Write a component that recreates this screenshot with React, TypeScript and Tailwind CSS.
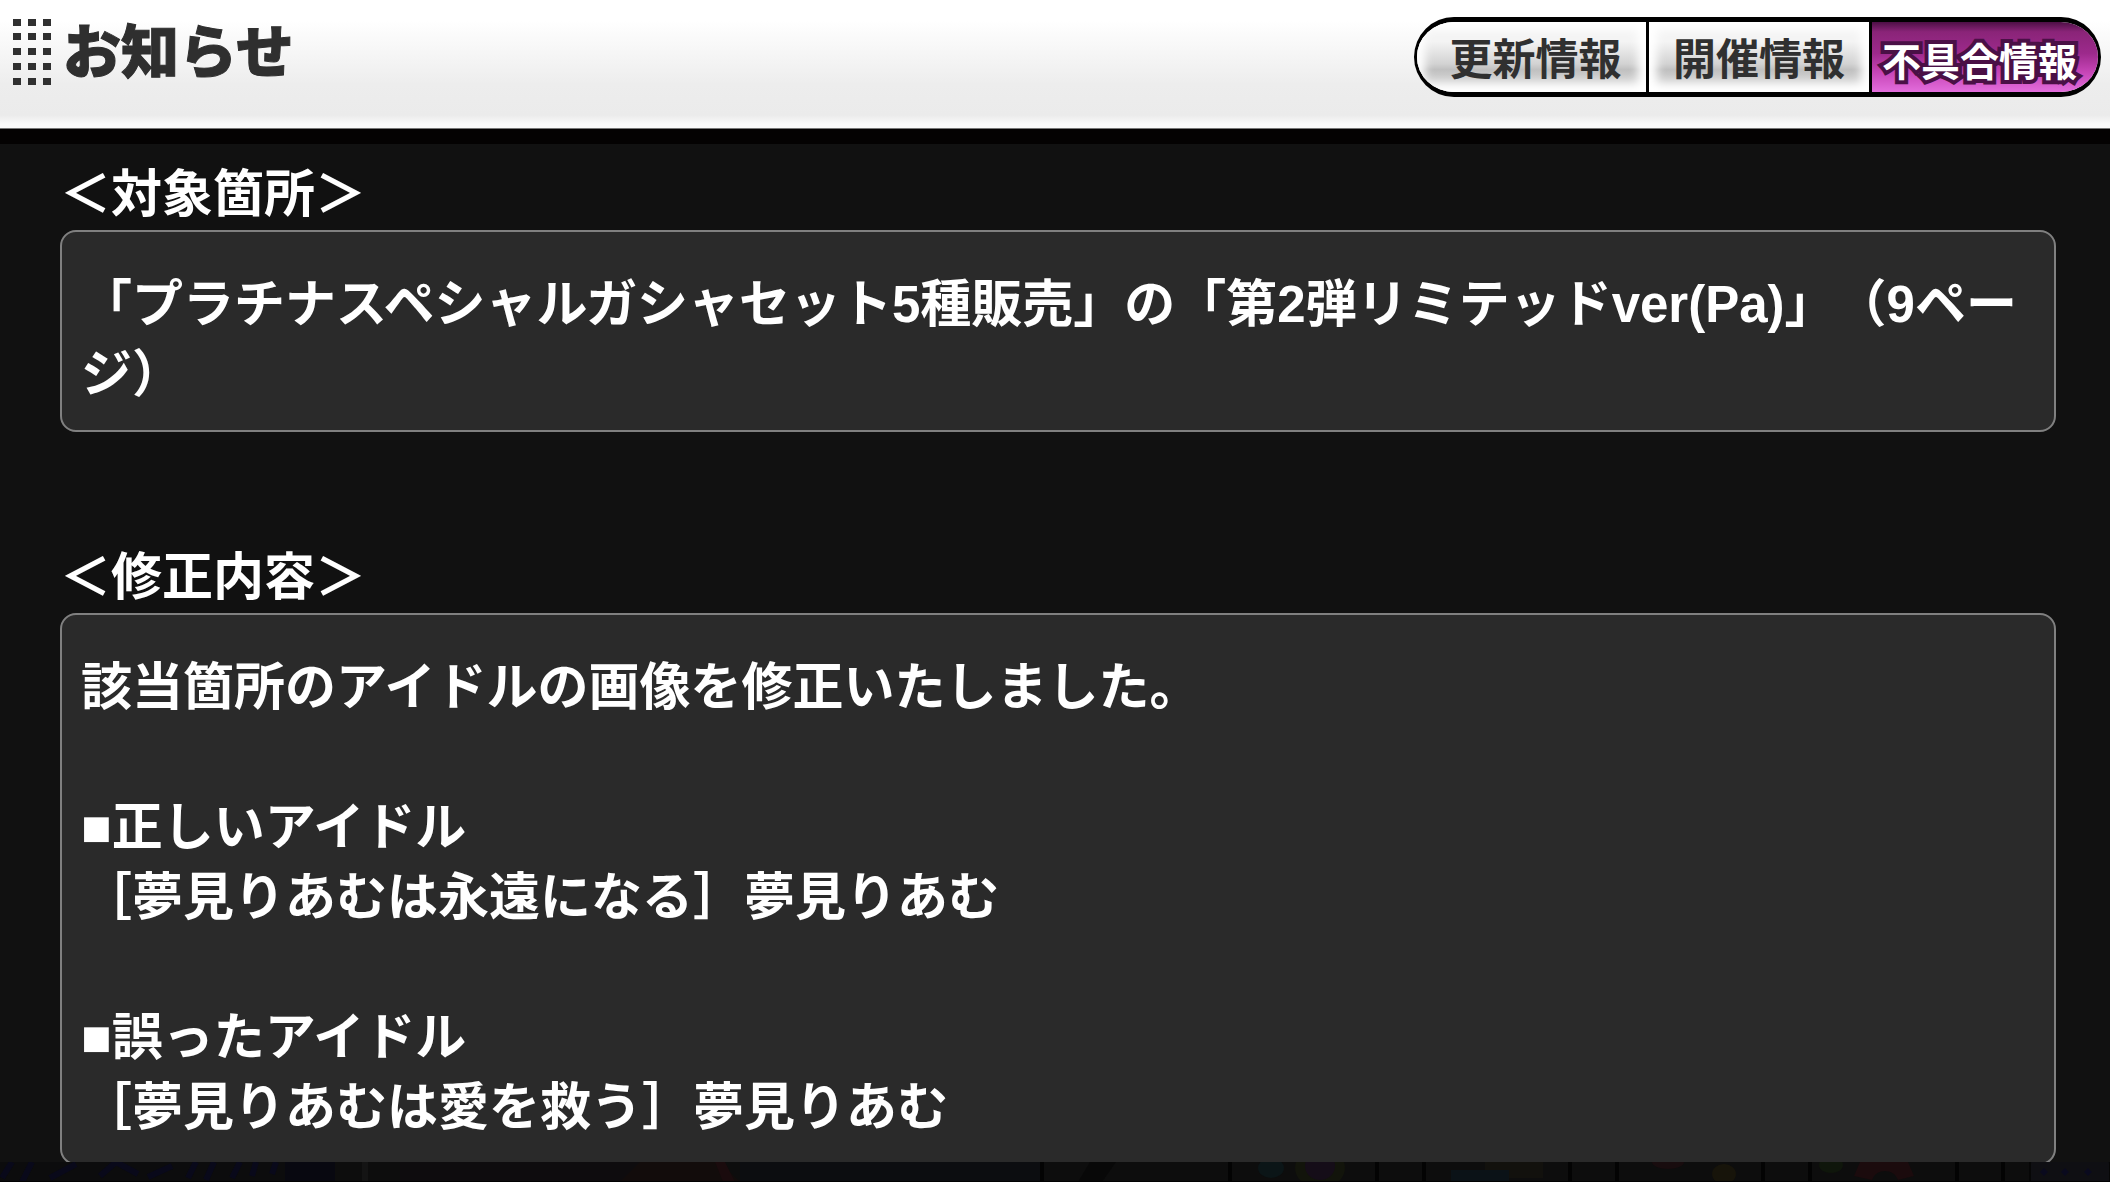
import type { ReactNode } from "react";

const font =
  "font-['Liberation_Sans','Noto_Sans_CJK_JP',sans-serif] font-bold [text-spacing-trim:space-all]";

function DotGrid() {
  return (
    <svg className="mt-[19px] ml-[13px] shrink-0" width="38" height="67" viewBox="0 0 38 67" aria-hidden="true">
      {[0, 15, 30].map((x) =>
        [0, 14, 29, 44, 59].map((y) => (
          <rect key={`${x}-${y}`} x={x} y={y} width="8" height="7" fill="#303030" />
        )),
      )}
    </svg>
  );
}

const idleTab =
  "flex items-center justify-center bg-[linear-gradient(#f4f4f4,#f4f4f4_28%,#d2d2d2_60%,#c0c0c0_68%,#e8e8e8)] pt-[6px] text-[43px] leading-none whitespace-nowrap text-[#303030] shadow-[inset_0_0_10px_8px_#ffffff]";

function Tabs() {
  return (
    <nav className="mt-[17px] mr-[9px] flex h-20 shrink-0 overflow-hidden rounded-full border-x-[3px] border-y-[5px] border-black bg-white">
      <button type="button" className={`${idleTab} w-[229px] pl-2`}>
        更新情報
      </button>
      <button type="button" className={`${idleTab} w-[223px] border-l-[3px] border-black`}>
        開催情報
      </button>
      <button
        type="button"
        aria-current="page"
        className="flex w-[229px] items-center border-l-[3px] border-black bg-[linear-gradient(#4d0f45,#8a2478_14%,#9d2a8c_45%,#c443b4_70%,#e36ddc)] pt-[10px] pl-[10px] text-[39px] leading-none whitespace-nowrap text-white [paint-order:stroke_fill] [-webkit-text-stroke:8px_#4a1046]"
      >
        不具合情報
      </button>
    </nav>
  );
}

function Section({ title, children }: { title: string; children: ReactNode }) {
  return (
    <section className="mb-[101px]">
      <h2 className="pt-[10px] text-[51px] leading-[70px]">{title}</h2>
      <div className="rounded-2xl border-2 border-[#808080] bg-[#2a2a2a] px-[19px] pt-[38px] pb-5 text-[51px] leading-[70px]">
        {children}
      </div>
    </section>
  );
}

function Backdrop() {
  return (
    <svg
      className="block h-5 w-full shrink-0"
      viewBox="0 0 2110 20"
      preserveAspectRatio="xMinYMin slice"
      aria-hidden="true"
    >
      <rect width="2110" height="20" fill="#0d0d0d" />
      <rect width="335" height="20" fill="#0c0c0d" />
      <g stroke="#09091a" strokeWidth="6" fill="none">
        <path d="M2 16 12 0M22 20 32 0M50 16 76 2M100 14 116 0 138 12M148 15 172 4M188 16 196 0M206 18 214 0M232 16 240 0M252 14 256 0M272 12 276 0" />
      </g>
      <rect x="285" width="50" height="20" fill="#080810" />
      <rect x="362" width="6" height="20" fill="#141414" />
      <rect x="400" width="240" height="20" fill="#0e0c0e" />
      <path d="M640 0h80l20 20H620z" fill="#120c0b" />
      <path d="M715 0h10l10 20h-12z" fill="#1a0b0d" />
      <rect x="740" width="300" height="20" fill="#0c0d10" />
      <path d="M1090 0h26l-14 20h-24z" fill="#080808" />
      <g fill="#030303">
        {[1040, 1228, 1375, 1422, 1568, 1615, 1761, 1808, 1955, 2001].map((x) => (
          <rect key={x} x={x} width="4" height="20" />
        ))}
      </g>
      <ellipse cx="1271" cy="6" rx="13" ry="10" fill="#0b1517" />
      <ellipse cx="1320" cy="6" rx="25" ry="20" fill="#12140b" />
      <ellipse cx="1320" cy="4" rx="15" ry="14" fill="#150d18" />
      <rect x="1485" width="58" height="16" fill="#12110d" />
      <rect x="1451" y="8" width="58" height="12" fill="#0b1217" />
      <ellipse cx="1668" cy="0" rx="16" ry="7" fill="#180c0e" />
      <ellipse cx="1724" cy="12" rx="12" ry="10" fill="#17140a" />
      <ellipse cx="1831" cy="3" rx="12" ry="8" fill="#0f160b" />
      <path d="M1860 0h48l6 14-16 4c-4-12-22-12-26 0l-18-4z" fill="#1b0b0d" />
      <rect x="2030" y="-8" width="80" height="40" rx="10" fill="#0f0f13" stroke="#060606" strokeWidth="2" />
      <path d="M2044 6l4 4-4 4-4-4zM2065 6l4 4-4 4-4-4zM2088 6l4 4-4 4-4-4z" fill="#0a0a1e" />
      <rect y="19" width="2110" height="1" fill="#020202" />
    </svg>
  );
}

export default function App() {
  return (
    <div className={`${font} flex h-screen flex-col overflow-hidden bg-[#111111] text-white`}>
      <header className="flex h-[129px] shrink-0 items-start justify-between border-b border-[#777777] bg-[linear-gradient(#ffffff_16%,#ededed_66%,#ebebeb_90%,#fafafa_97%)]">
        <div className="flex items-start">
          <DotGrid />
          <h1 className="mt-6 ml-3 text-[58px] leading-none font-black whitespace-nowrap text-[#2f2f2f] [-webkit-text-stroke:1px_#2f2f2f]">
            お知らせ
          </h1>
        </div>
        <Tabs />
      </header>
      <div className="h-[15px] shrink-0 bg-[#040202]" />
      <main className="min-h-0 flex-1 overflow-hidden pt-[6px] pr-[54px] pl-[60px]">
        <Section title="＜対象箇所＞">
          <p>「プラチナスペシャルガシャセット5種販売」の「第2弾リミテッドver(Pa)」（9ページ）</p>
        </Section>
        <Section title="＜修正内容＞">
          <p>該当箇所のアイドルの画像を修正いたしました。</p>
          <br />
          <p>■正しいアイドル</p>
          <p>［夢見りあむは永遠になる］夢見りあむ</p>
          <br />
          <p>■誤ったアイドル</p>
          <p>［夢見りあむは愛を救う］夢見りあむ</p>
        </Section>
      </main>
      <Backdrop />
    </div>
  );
}
